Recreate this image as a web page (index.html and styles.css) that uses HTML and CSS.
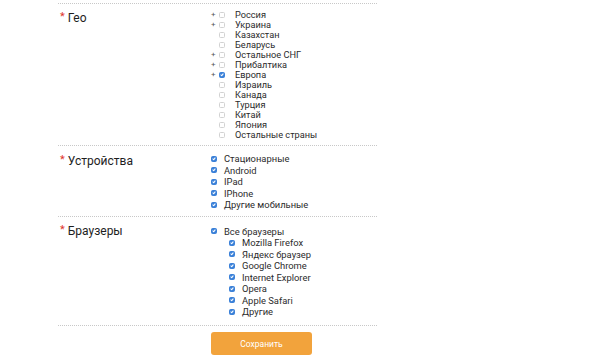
FILE: index.html
```html
<!DOCTYPE html>
<html lang="ru">
<head>
    <meta charset="UTF-8">
    <title>Таргетинг</title>
    <link rel="stylesheet" href="styles.css">
</head>
<body>
    <form class="filter">
        <div class="row row-geo">
            <div class="row-label"><span class="req">*</span>Гео</div>
            <ul class="checks checks-geo">
                <li><span class="plus">+</span><span class="cb"></span>Россия</li>
                <li><span class="plus">+</span><span class="cb"></span>Украина</li>
                <li><span class="plus"></span><span class="cb"></span>Казахстан</li>
                <li><span class="plus"></span><span class="cb"></span>Беларусь</li>
                <li><span class="plus">+</span><span class="cb"></span>Остальное СНГ</li>
                <li><span class="plus">+</span><span class="cb"></span>Прибалтика</li>
                <li><span class="plus">+</span><span class="cb on"></span>Европа</li>
                <li><span class="plus"></span><span class="cb"></span>Израиль</li>
                <li><span class="plus"></span><span class="cb"></span>Канада</li>
                <li><span class="plus"></span><span class="cb"></span>Турция</li>
                <li><span class="plus"></span><span class="cb"></span>Китай</li>
                <li><span class="plus"></span><span class="cb"></span>Япония</li>
                <li><span class="plus"></span><span class="cb"></span>Остальные страны</li>
            </ul>
        </div>
        <div class="row row-dev">
            <div class="row-label"><span class="req">*</span>Устройства</div>
            <ul class="checks">
                <li><span class="cb on"></span>Стационарные</li>
                <li><span class="cb on"></span>Android</li>
                <li><span class="cb on"></span>IPad</li>
                <li><span class="cb on"></span>IPhone</li>
                <li><span class="cb on"></span>Другие мобильные</li>
            </ul>
        </div>
        <div class="row row-br">
            <div class="row-label"><span class="req">*</span>Браузеры</div>
            <ul class="checks">
                <li><span class="cb on"></span>Все браузеры</li>
                <li class="sub"><span class="cb on"></span>Mozilla Firefox</li>
                <li class="sub"><span class="cb on"></span>Яндекс браузер</li>
                <li class="sub"><span class="cb on"></span>Google Chrome</li>
                <li class="sub"><span class="cb on"></span>Internet Explorer</li>
                <li class="sub"><span class="cb on"></span>Opera</li>
                <li class="sub"><span class="cb on"></span>Apple Safari</li>
                <li class="sub"><span class="cb on"></span>Другие</li>
            </ul>
        </div>
        <div class="actions">
            <button type="button" class="btn-save">Сохранить</button>
        </div>
    </form>
</body>
</html>
```

FILE: styles.css
```css
body {
    margin: 0;
    background-color: #fff;
    font-family: Roboto, "Noto Sans", sans-serif;
    color: #2b2b2b;
}

ul {
    margin: 0;
    padding: 0;
    list-style: none;
}

.filter {
    width: 319px;
    margin-left: 58px;
    padding-top: 3px;
}

.row {
    display: grid;
    grid-template-columns: 153px 1fr;
    border-top: 1px dotted #c8c8c8;
}

.row-geo {
    padding: 6px 0 5px;
}

.row-dev {
    padding: 7px 0 5px;
}

.row-br {
    padding: 9px 0 7px;
}

.row-label {
    padding-left: 2px;
    font-size: 12px;
    line-height: 13px;
    color: #1e1e1e;
}

.row-br .row-label {
    margin-top: -3px;
}

.req {
    margin-right: 3px;
    color: #e0332c;
    font-size: 11px;
    vertical-align: 2px;
}

.checks li {
    display: flex;
    align-items: center;
    height: 11.5px;
    line-height: 11.5px;
    font-size: 9.4px;
    white-space: nowrap;
}

.checks-geo li {
    height: 10px;
    line-height: 10px;
    font-size: 9.2px;
}

.checks .sub {
    padding-left: 18px;
}

.plus {
    width: 8px;
    font-size: 8px;
    line-height: 1;
    color: #555;
}

.cb {
    position: relative;
    box-sizing: border-box;
    width: 6px;
    height: 6px;
    margin-right: 7px;
    border: 1px solid #d2d2d2;
    border-radius: 1.5px;
    background-color: #fff;
}

.checks-geo .cb {
    margin-right: 10px;
}

.cb.on {
    border-color: #3a80d8;
    background-color: #3a80d8;
}

.cb.on:after {
    content: "";
    position: absolute;
    left: 1px;
    top: 0;
    width: 1px;
    height: 2px;
    border-right: 1px solid #fff;
    border-bottom: 1px solid #fff;
    transform: rotate(40deg);
}

.actions {
    border-top: 1px dotted #c8c8c8;
    padding: 6px 0 0 153px;
}

.btn-save {
    width: 101px;
    height: 23px;
    border: 0;
    border-radius: 3px;
    background-color: #f2a33c;
    color: #fff;
    font-family: inherit;
    font-size: 8.5px;
    cursor: pointer;
}
```
